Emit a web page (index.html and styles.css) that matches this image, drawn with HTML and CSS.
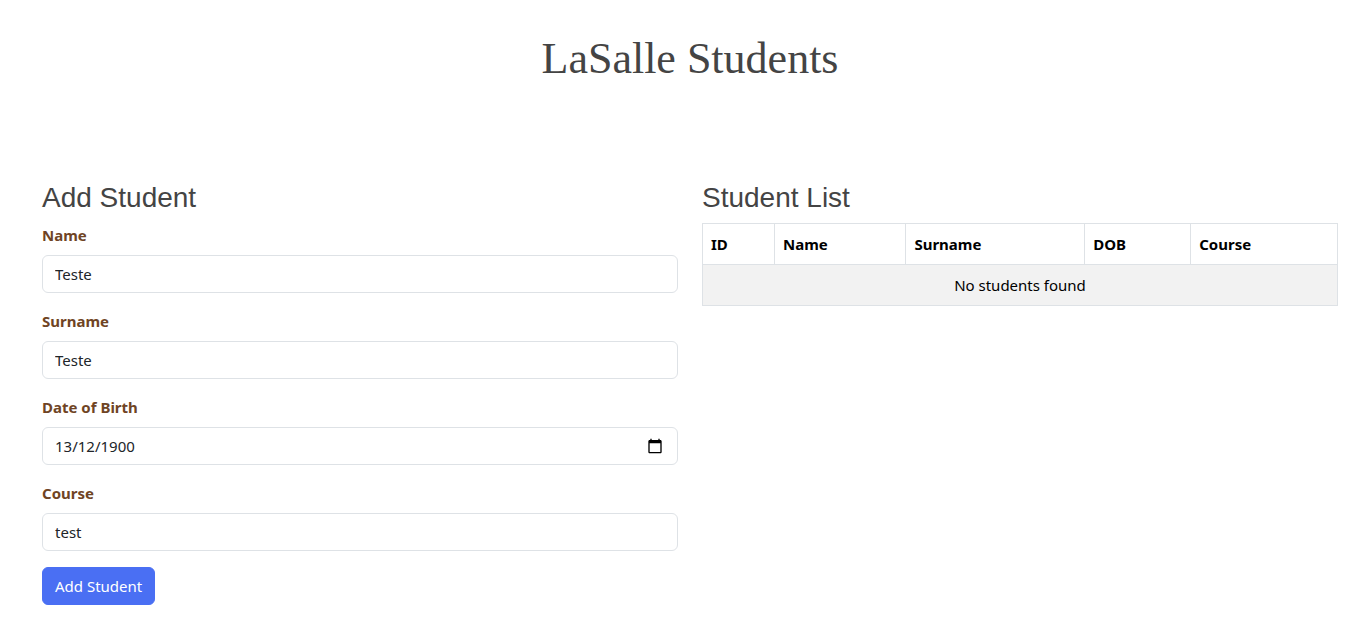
FILE: index.html
```html
<!DOCTYPE html>
<html lang="en-GB">
<head>
  <meta charset="utf-8">
  <meta name="viewport" content="width=device-width, initial-scale=1">
  <title>LaSalle Students</title>
  <link rel="stylesheet" href="styles.css">
</head>
<body>
  <div class="page">
    <h1 class="title">LaSalle Students</h1>
    <main class="columns">
      <section>
        <h2 class="heading">Add Student</h2>
        <form class="form">
          <div class="field">
            <label class="label" for="name">Name</label>
            <input class="control" id="name" type="text" value="Teste">
          </div>
          <div class="field">
            <label class="label" for="surname">Surname</label>
            <input class="control" id="surname" type="text" value="Teste">
          </div>
          <div class="field">
            <label class="label" for="dob">Date of Birth</label>
            <div class="date">
              <input class="control" id="dob" type="text" value="13/12/1900">
              <svg class="date-icon" viewBox="0 0 24 24" aria-hidden="true"><path d="M20 3h-1V1h-2v2H7V1H5v2H4c-1.100 0-2 .9-2 2v16c0 1.100.9 2 2 2h16c1.100 0 2-.9 2-2V5c0-1.100-.9-2-2-2zm0 18H4V8h16v13z"/></svg>
            </div>
          </div>
          <div class="field">
            <label class="label" for="course">Course</label>
            <input class="control" id="course" type="text" value="test">
          </div>
          <button class="button" type="button">Add Student</button>
        </form>
      </section>
      <section>
        <h2 class="heading">Student List</h2>
        <table class="table">
          <thead>
            <tr><th>ID</th><th>Name</th><th>Surname</th><th>DOB</th><th>Course</th></tr>
          </thead>
          <tbody>
            <tr><td class="empty" colspan="5">No students found</td></tr>
          </tbody>
        </table>
      </section>
    </main>
  </div>
</body>
</html>
```

FILE: styles.css
```css
*, *::before, *::after { box-sizing: border-box; }

body {
  margin: 0;
  background: #fff;
  color: #212529;
  font: 15px/24px "Segoe UI", "Noto Sans", sans-serif;
}

.page { padding: 35px 34px 16px 42px; }

.title {
  margin: 0 0 98px;
  color: #444;
  font: 400 44px/48px Georgia, "Liberation Serif", serif;
  text-align: center;
}

.columns {
  display: grid;
  grid-template-columns: 1fr 1fr;
  gap: 24px;
}

.heading {
  margin: 0 0 8px;
  color: #444;
  font: 400 28px/34px Arial, "Liberation Sans", sans-serif;
}

.form {
  display: flex;
  flex-direction: column;
  align-items: flex-start;
  gap: 16px;
}

.field { width: 100%; }

.label {
  display: block;
  margin-bottom: 8px;
  color: #6f4424;
  font-weight: 700;
}

.control {
  display: block;
  width: 100%;
  height: 38px;
  padding: 6px 12px;
  border: 1px solid #dee2e6;
  border-radius: 6px;
  background: #fff;
  color: #212529;
  font: inherit;
}

.date { position: relative; }

.date-icon {
  position: absolute;
  top: 11px;
  right: 15px;
  width: 16px;
  height: 16px;
}

.button {
  height: 38px;
  padding: 6px 12px;
  border: 1px solid #4a6ff3;
  border-radius: 6px;
  background: #4a6ff3;
  color: #fff;
  font: inherit;
}

.table {
  width: 100%;
  border-collapse: collapse;
  color: #000;
}

.table th, .table td {
  padding: 8px;
  border: 1px solid #dee2e6;
  text-align: left;
}

.table .empty {
  background: #f2f2f2;
  text-align: center;
}
```
